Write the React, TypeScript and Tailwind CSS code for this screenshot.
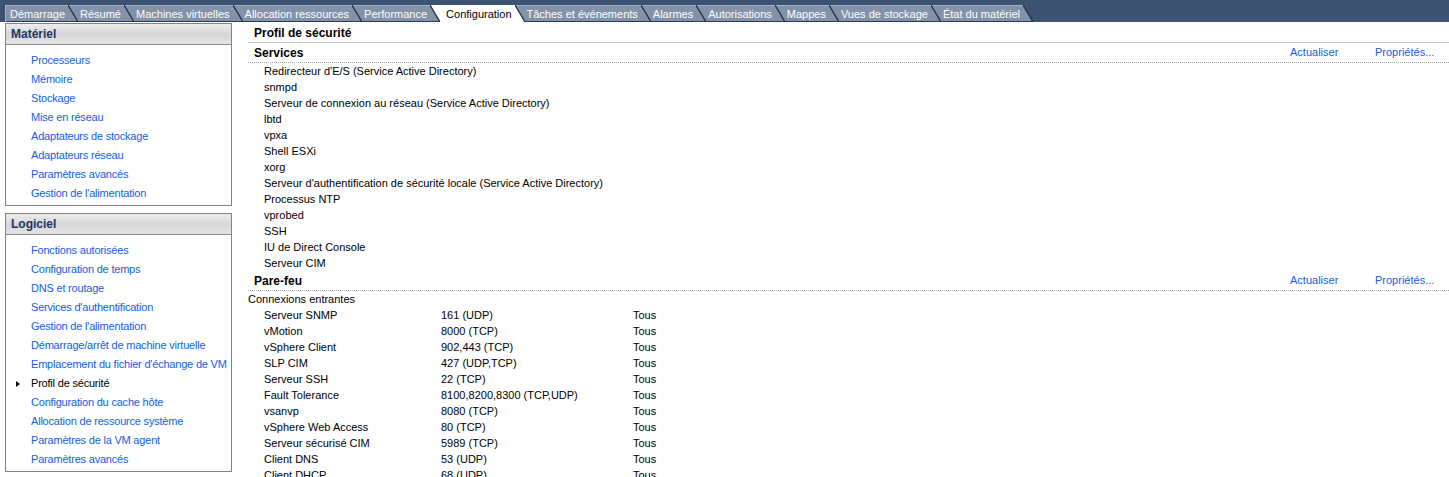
import clsx from 'clsx'

const tabs = [
  'Démarrage',
  'Résumé',
  'Machines virtuelles',
  'Allocation ressources',
  'Performance',
  'Configuration',
  'Tâches et événements',
  'Alarmes',
  'Autorisations',
  'Mappes',
  'Vues de stockage',
  'État du matériel',
]
const ACTIVE = 'Configuration'
const BAR = '#3d5373'
const TAB = '#8292a8'

const hardware = [
  'Processeurs',
  'Mémoire',
  'Stockage',
  'Mise en réseau',
  'Adaptateurs de stockage',
  'Adaptateurs réseau',
  'Paramètres avancés',
  "Gestion de l'alimentation",
]

const software = [
  'Fonctions autorisées',
  'Configuration de temps',
  'DNS et routage',
  "Services d'authentification",
  "Gestion de l'alimentation",
  'Démarrage/arrêt de machine virtuelle',
  "Emplacement du fichier d'échange de VM",
  'Profil de sécurité',
  'Configuration du cache hôte',
  'Allocation de ressource système',
  'Paramètres de la VM agent',
  'Paramètres avancés',
]

const services = [
  "Redirecteur d'E/S (Service Active Directory)",
  'snmpd',
  'Serveur de connexion au réseau (Service Active Directory)',
  'lbtd',
  'vpxa',
  'Shell ESXi',
  'xorg',
  "Serveur d'authentification de sécurité locale (Service Active Directory)",
  'Processus NTP',
  'vprobed',
  'SSH',
  'IU de Direct Console',
  'Serveur CIM',
]

const firewall = [
  ['Serveur SNMP', '161 (UDP)'],
  ['vMotion', '8000 (TCP)'],
  ['vSphere Client', '902,443 (TCP)'],
  ['SLP CIM', '427 (UDP,TCP)'],
  ['Serveur SSH', '22 (TCP)'],
  ['Fault Tolerance', '8100,8200,8300 (TCP,UDP)'],
  ['vsanvp', '8080 (TCP)'],
  ['vSphere Web Access', '80 (TCP)'],
  ['Serveur sécurisé CIM', '5989 (TCP)'],
  ['Client DNS', '53 (UDP)'],
  ['Client DHCP', '68 (UDP)'],
]

function TabStrip() {
  return (
    <div className="flex h-[22px] items-end bg-[#3d5373] pl-[5px]">
      {tabs.map((t, i) => {
        const active = t === ACTIVE
        const next = tabs[i + 1]
        const left = active ? '#ffffff' : TAB
        const right = next === undefined ? BAR : next === ACTIVE ? '#ffffff' : TAB
        return (
          <div key={t} className="flex h-[17px]">
            <span
              className={clsx(
                'flex items-center whitespace-nowrap border-t pr-[3px] leading-none',
                i === 0 ? 'border-l pl-[4px]' : 'pl-[2px]',
                active
                  ? 'border-white bg-white pl-[6px] text-black'
                  : 'border-[#a3afc0] bg-[#8292a8] text-white shadow-[inset_0_-1px_0_#2c3c55]'
              )}
            >
              {t}
            </span>
            <svg width="10" height="17" className="block shrink-0">
              <polygon points="0,0 10,0 10,17" fill={right} />
              <polygon points="0,0 10,17 0,17" fill={left} />
              {!active && <line x1="0" y1="16.5" x2="10" y2="16.5" stroke="#2c3c55" />}
              {right !== '#ffffff' && right !== BAR && <line x1="0" y1="0.5" x2="10" y2="0.5" stroke="#a3afc0" />}
              <line x1="0" y1="0" x2="10" y2="17" stroke="#1e2b40" strokeWidth="1.2" />
            </svg>
          </div>
        )
      })}
    </div>
  )
}

function SideBox({ title, items, current }: { title: string; items: string[]; current?: string }) {
  return (
    <div className="border border-[#828282] bg-white">
      <div className="flex h-[21px] items-center border-b border-[#8e8e8e] bg-linear-to-b from-[#ededed] via-[#d6d6d6] to-[#e4e4e4] pl-[5px] text-[12px] font-bold text-[#1b3766]">
        {title}
      </div>
      <ul className="pb-[2px] pt-[6px] tracking-[-0.2px]">
        {items.map((it) => (
          <li key={it} className="flex h-[19px] items-center whitespace-nowrap">
            <span className="flex w-[25px] shrink-0 justify-end pr-[11px]">
              {it === current && (
                <svg width="4" height="6" className="block">
                  <polygon points="0,0 4,3 0,6" fill="#000" />
                </svg>
              )}
            </span>
            <span className={it === current ? 'text-black' : 'text-[#1160e6]'}>{it}</span>
          </li>
        ))}
      </ul>
    </div>
  )
}

function SectionHead({ title }: { title: string }) {
  return (
    <div className="flex h-[20px] items-center border-b border-dotted border-[#a8a8a8]">
      <span className="flex-1 pl-[6px] text-[12px] font-bold">{title}</span>
      <span className="w-[85px] text-[#1160e6]">Actualiser</span>
      <span className="w-[74px] text-[#1160e6]">Propriétés...</span>
    </div>
  )
}

export default function App() {
  return (
    <div className="h-[477px] overflow-hidden bg-white text-[11px] text-black [font-family:'Liberation_Sans',Arial,sans-serif]">
      <TabStrip />
      <div className="flex pt-[1px]">
        <aside className="ml-[5px] flex w-[227px] shrink-0 flex-col gap-[7px]">
          <SideBox title="Matériel" items={hardware} />
          <SideBox title="Logiciel" items={software} current="Profil de sécurité" />
        </aside>
        <main className="ml-[16px] min-w-0 flex-1">
          <div className="flex h-[20px] items-center border-b border-[#c4c4c4] pl-[6px] pt-[1px] text-[12px] font-bold">
            Profil de sécurité
          </div>
          <SectionHead title="Services" />
          <ul>
            {services.map((s) => (
              <li key={s} className="flex h-[16px] items-center pl-[16px]">
                {s}
              </li>
            ))}
          </ul>
          <SectionHead title="Pare-feu" />
          <div className="flex h-[16px] items-center">Connexions entrantes</div>
          <ul>
            {firewall.map(([name, port]) => (
              <li key={name} className="flex h-[16px] items-center pl-[16px]">
                <span className="w-[177px]">{name}</span>
                <span className="w-[192px]">{port}</span>
                <span>Tous</span>
              </li>
            ))}
          </ul>
        </main>
      </div>
    </div>
  )
}
